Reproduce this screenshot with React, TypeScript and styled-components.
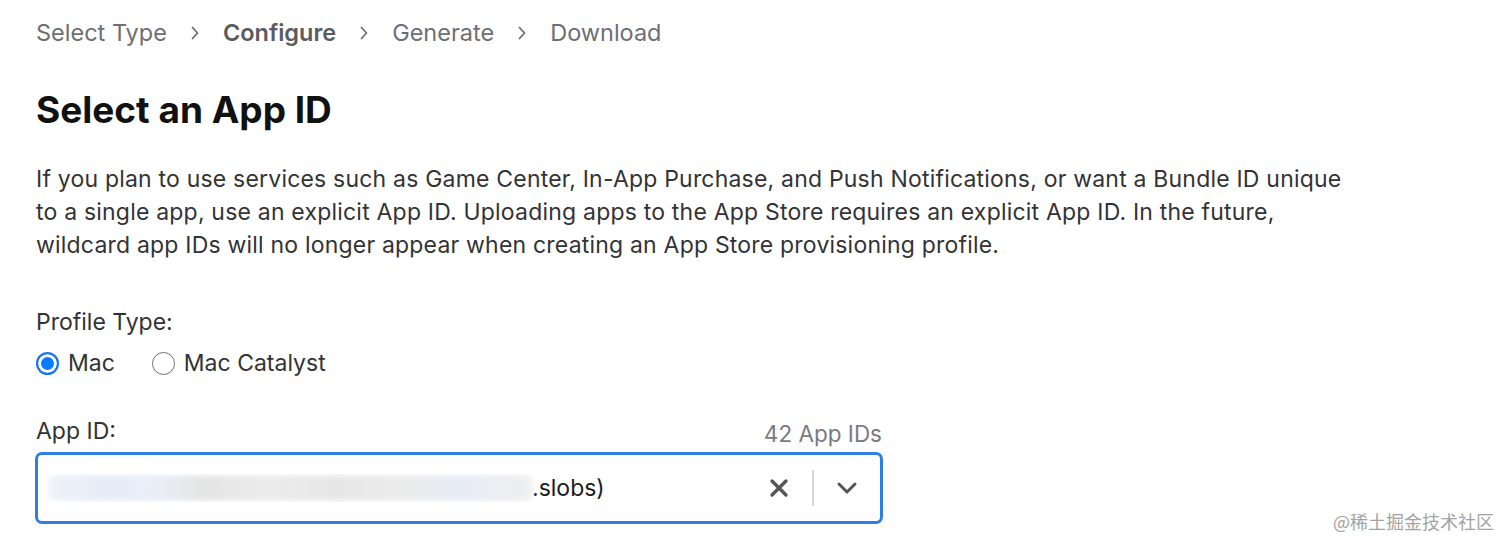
import React from "react";
import styled, { createGlobalStyle } from "styled-components";

const Global = createGlobalStyle`
  html, body { margin: 0; padding: 0; background: #ffffff; }
  body { font-family: Inter, "Noto Sans", "Liberation Sans", sans-serif; color: #1d1d1f; }
`;

const Page = styled.div`
  position: relative;
  width: 1512px;
  height: 549px;
  overflow: hidden;
  padding: 18px 36px 0;
  box-sizing: border-box;
`;

const Crumbs = styled.nav`
  display: flex;
  align-items: center;
  gap: 23px;
  font-size: 23.5px;
  line-height: 30px;
  color: #6e6e73;
`;

const Crumb = styled.span<{ $active?: boolean }>`
  font-weight: ${(p) => (p.$active ? 600 : 400)};
  color: ${(p) => (p.$active ? "#5b5b5f" : "#6e6e73")};
`;

const Chevron = styled.svg`
  width: 10px;
  height: 16px;
  flex: none;
`;

const Title = styled.h1`
  margin: 40px 0 0;
  font-size: 37px;
  line-height: 44px;
  font-weight: 700;
  color: #111111;
`;

const Lead = styled.p`
  margin: 31px 0 0;
  width: 1320px;
  font-size: 23px;
  line-height: 33px;
  letter-spacing: 0.2px;
  color: #333336;
`;

const Label = styled.div`
  font-size: 23px;
  line-height: 30px;
  color: #333336;
`;

const FieldGroup = styled.section<{ $top: number }>`
  margin-top: ${(p) => p.$top}px;
`;

const Radios = styled.div`
  display: flex;
  align-items: center;
  gap: 37px;
  margin-top: 11px;
`;

const RadioOption = styled.label`
  display: flex;
  align-items: center;
  gap: 9px;
  font-size: 23px;
  line-height: 30px;
  color: #333336;
`;

const RadioDot = styled.span<{ $checked?: boolean }>`
  box-sizing: border-box;
  width: 23px;
  height: 23px;
  border-radius: 50%;
  border: ${(p) => (p.$checked ? "2px solid #1a73e8" : "1.5px solid #6f6f6f")};
  background: ${(p) => (p.$checked ? "#0a7aff" : "#fff")};
  box-shadow: ${(p) => (p.$checked ? "inset 0 0 0 3px #fff" : "none")};
`;

const LabelRow = styled.div`
  width: 846px;
  display: flex;
  justify-content: space-between;
  align-items: flex-end;
`;

const Count = styled.span`
  font-size: 22.5px;
  line-height: 26px;
  color: #7a7a7e;
  margin-bottom: -1px;
`;

const Select = styled.div`
  box-sizing: border-box;
  margin: 6px 0 0 -1px;
  width: 848px;
  height: 72px;
  border: 3px solid #2f7ee6;
  border-radius: 7px;
  display: flex;
  align-items: center;
  padding: 0 16px 0 10px;
`;

const Value = styled.div`
  flex: 1;
  display: flex;
  align-items: center;
  font-size: 23px;
  color: #1d1d1f;
  overflow: hidden;
`;

const Redacted = styled.span`
  display: inline-block;
  width: 484px;
  height: 26px;
  border-radius: 8px;
  background: linear-gradient(
    90deg,
    #eef1f6 0%,
    #e6ecf8 12%,
    #e9eef9 22%,
    #e4e4e4 32%,
    #ececec 45%,
    #e6e6e6 60%,
    #ececec 72%,
    #e8ecf6 85%,
    #eeeeee 100%
  );
  filter: blur(3px);
`;

const Controls = styled.div`
  display: flex;
  align-items: center;
`;

const IconBtn = styled.span`
  display: flex;
  align-items: center;
  justify-content: center;
  width: 34px;
  height: 34px;
`;

const Divider = styled.span`
  width: 2px;
  height: 36px;
  background: #d8d8d8;
  margin: 0 16px 0 16px;
`;

const Watermark = styled.div`
  position: absolute;
  right: 18px;
  bottom: 15px;
  font-size: 18px;
  color: #a3a3a3;
  font-family: "Noto Sans CJK SC", "Noto Sans", sans-serif;
`;

const Sep = () => (
  <Chevron viewBox="0 0 10 16">
    <path d="M2.5 2.5 L7.5 8 L2.5 13.5" fill="none" stroke="#6e6e73" strokeWidth="1.8" strokeLinecap="round" strokeLinejoin="round" />
  </Chevron>
);

export default function App() {
  return (
    <>
      <Global />
      <Page>
        <Crumbs>
          <Crumb>Select Type</Crumb>
          <Sep />
          <Crumb $active>Configure</Crumb>
          <Sep />
          <Crumb>Generate</Crumb>
          <Sep />
          <Crumb>Download</Crumb>
        </Crumbs>
        <Title>Select an App ID</Title>
        <Lead>
          If you plan to use services such as Game Center, In-App Purchase, and Push Notifications, or want a Bundle ID unique
          to a single app, use an explicit App ID. Uploading apps to the App Store requires an explicit App ID. In the future,
          wildcard app IDs will no longer appear when creating an App Store provisioning profile.
        </Lead>
        <FieldGroup $top={45}>
          <Label>Profile Type:</Label>
          <Radios>
            <RadioOption>
              <RadioDot $checked />
              Mac
            </RadioOption>
            <RadioOption>
              <RadioDot />
              Mac Catalyst
            </RadioOption>
          </Radios>
        </FieldGroup>
        <FieldGroup $top={38}>
          <LabelRow>
            <Label>App ID:</Label>
            <Count>42 App IDs</Count>
          </LabelRow>
          <Select>
            <Value>
              <Redacted aria-hidden="true" />
              <span>.slobs)</span>
            </Value>
            <Controls>
              <IconBtn>
                <svg width="20" height="20" viewBox="0 0 20 20">
                  <path d="M3 3 L17 17 M17 3 L3 17" stroke="#555" strokeWidth="3.4" strokeLinecap="round" />
                </svg>
              </IconBtn>
              <Divider />
              <IconBtn>
                <svg width="22" height="14" viewBox="0 0 22 14">
                  <path d="M3 3 L11 11 L19 3" fill="none" stroke="#555" strokeWidth="3" strokeLinecap="round" strokeLinejoin="round" />
                </svg>
              </IconBtn>
            </Controls>
          </Select>
        </FieldGroup>
        <Watermark>@稀土掘金技术社区</Watermark>
      </Page>
    </>
  );
}
